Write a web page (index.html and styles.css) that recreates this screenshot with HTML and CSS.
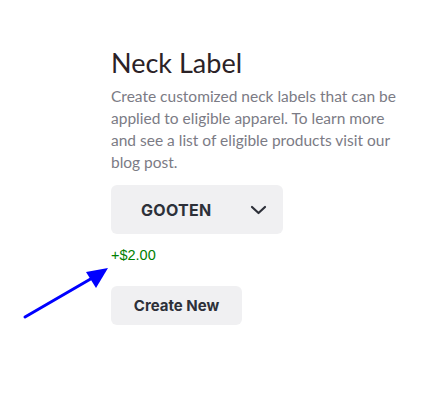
FILE: index.html
```html
<!DOCTYPE html>
<html>
<head>
<meta charset="utf-8">
<link rel="stylesheet" href="styles.css">
</head>
<body>
<div class="panel">
  <h2 class="title">Neck Label</h2>
  <p class="desc">Create customized neck labels that can be applied to eligible apparel. To learn more and see a list of eligible products visit our blog post.</p>
  <button class="select">
    <span class="select-label">GOOTEN</span>
    <svg class="chev" width="17" height="10" viewBox="0 0 17 10"><path d="M2 2 L8.5 8 L15 2" fill="none" stroke="#2d3039" stroke-width="2.2" stroke-linecap="round" stroke-linejoin="round"/></svg>
  </button>
  <div class="price">+$2.00</div>
  <button class="create">Create New</button>
</div>
<svg class="arrow" width="446" height="405" viewBox="0 0 446 405">
  <line x1="25" y1="317" x2="94" y2="277" stroke="#0000ff" stroke-width="3" stroke-linecap="round"/>
  <polygon points="108,268 86,272 96,288" fill="#0000ff"/>
</svg>
</body>
</html>
```
FILE: styles.css
```css
html, body {
  margin: 0;
  padding: 0;
  background: #ffffff;
}
body {
  position: relative;
  width: 446px;
  height: 405px;
  overflow: hidden;
}
.panel {
  padding: 46px 0 0 111px;
  width: 288px;
  font-family: "Lato", "Open Sans", sans-serif;
}
.title {
  margin: 0;
  font-size: 27px;
  line-height: 34px;
  font-weight: 400;
  color: #2b2226;
}
.desc {
  margin: 5px 0 0 0;
  font-size: 15.5px;
  line-height: 22px;
  color: #7b7b85;
}
.select {
  display: flex;
  align-items: center;
  margin-top: 12px;
  width: 172px;
  height: 49px;
  border: none;
  border-radius: 6px;
  background: #f0f0f2;
  padding: 0 16px 0 30px;
  font-family: "Inter", "Liberation Sans", sans-serif;
  font-weight: 700;
  font-size: 16px;
  color: #2d3039;
  box-sizing: border-box;
}
.select-label {
  flex: 1;
  text-align: left;
  letter-spacing: 0.3px;
}
.chev {
  display: block;
}
.price {
  margin-top: 13px;
  font-family: "Liberation Sans", Arial, sans-serif;
  font-size: 14.5px;
  line-height: 16px;
  color: #008000;
}
.create {
  display: block;
  margin-top: 23px;
  width: 131px;
  height: 39px;
  border: none;
  border-radius: 6px;
  background: #f0f0f2;
  font-family: "Inter", "Liberation Sans", sans-serif;
  font-weight: 700;
  font-size: 15px;
  color: #2d3039;
  padding: 0;
}
.arrow {
  position: absolute;
  left: 0;
  top: 0;
  pointer-events: none;
}
```
